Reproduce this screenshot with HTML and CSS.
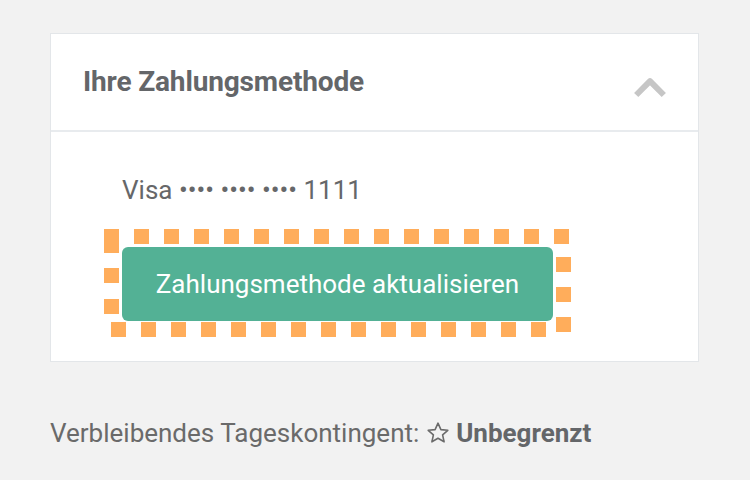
FILE: index.html
```html
<!DOCTYPE html>
<html lang="de">
<head>
<meta charset="utf-8">
<title>Ihre Zahlungsmethode</title>
<link rel="stylesheet" href="styles.css">
</head>
<body>
<main class="page">
  <section class="card">
    <header class="card-header">
      <h2 class="card-title">Ihre Zahlungsmethode</h2>
      <svg class="chevron" width="32" height="22" viewBox="0 0 32 22" aria-hidden="true">
        <path d="M2.2 19 L16 5.2 L29.8 19" fill="none" stroke="#c6c6c6" stroke-width="6" stroke-linecap="butt" stroke-linejoin="round"/>
      </svg>
    </header>
    <div class="card-body">
      <p class="card-number">Visa •••• •••• •••• 1111</p>
      <div class="btn-wrap">
        <button class="btn-update" type="button">Zahlungsmethode aktualisieren</button>
        <span class="focus-ring" aria-hidden="true"></span>
      </div>
    </div>
  </section>
  <p class="quota">Verbleibendes Tageskontingent: <svg class="star" width="24" height="24" viewBox="0 0 24 24" aria-hidden="true"><path d="M12 2.2 L14.9 8.6 L21.8 9.3 L16.6 13.9 L18.1 20.8 L12 17.2 L5.9 20.8 L7.4 13.9 L2.2 9.3 L9.1 8.6 Z" fill="none" stroke="#6b6b6b" stroke-width="1.6" stroke-linejoin="round"/></svg> <strong>Unbegrenzt</strong></p>
</main>
</body>
</html>
```

FILE: styles.css
```css
html, body {
  margin: 0;
  padding: 0;
}
body {
  background: #f2f2f2;
  font-family: Roboto, "Liberation Sans", sans-serif;
  color: #6a6a6a;
  width: 750px;
  height: 480px;
  overflow: hidden;
}
.page {
  padding: 33px 50px 0 50px;
}
.card {
  width: 647px;
  background: #ffffff;
  border: 1px solid #e3e6e9;
}
.card-header {
  height: 96px;
  display: flex;
  align-items: center;
  justify-content: space-between;
  padding: 0 32px 0 32px;
  border-bottom: 2px solid #e8ebee;
}
.card-title {
  margin: 0;
  font-size: 28px;
  line-height: 32px;
  font-weight: 700;
  color: #646669;
  letter-spacing: -0.15px;
}
.chevron {
  display: block;
  margin-top: 10px;
}
.card-body {
  padding: 43px 0 40px 71px;
}
.card-number {
  margin: 0;
  font-size: 26px;
  line-height: 30px;
  color: #666769;
}
.btn-wrap {
  position: relative;
  width: 431px;
  margin-top: 42px;
}
.btn-update {
  display: block;
  width: 431px;
  height: 74px;
  border: none;
  border-radius: 6px;
  background: #53b195;
  color: #ffffff;
  font-family: Roboto, "Liberation Sans", sans-serif;
  font-size: 26px;
  padding: 0;
}
.focus-ring {
  position: absolute;
  top: -18px;
  left: -18px;
  right: -18px;
  bottom: -16px;
  pointer-events: none;
  background:
    linear-gradient(90deg, #ffad5b 15px, transparent 15px) 0 0 / 30px 15px repeat-x,
    repeating-linear-gradient(90deg, #ffad5b 0 15px, transparent 15px 30px) 7px 100% / 435px 15px no-repeat,
    linear-gradient(180deg, #ffad5b 0 24px, transparent 24px 39px, #ffad5b 39px 54px, transparent 54px 70px, #ffad5b 70px 85px, transparent 85px) 0 0 / 15px 100% no-repeat,
    linear-gradient(180deg, transparent 0 28px, #ffad5b 28px 43px, transparent 43px 58px, #ffad5b 58px 73px, transparent 73px 88px, #ffad5b 88px 103px, transparent 103px) 100% 0 / 15px 100% no-repeat;
}
.quota {
  margin: 56px 0 0 0;
  font-size: 26px;
  line-height: 30px;
  color: #6a6a6a;
}
.quota strong {
  font-weight: 700;
  color: #646669;
}
.star {
  vertical-align: -3px;
}
```
